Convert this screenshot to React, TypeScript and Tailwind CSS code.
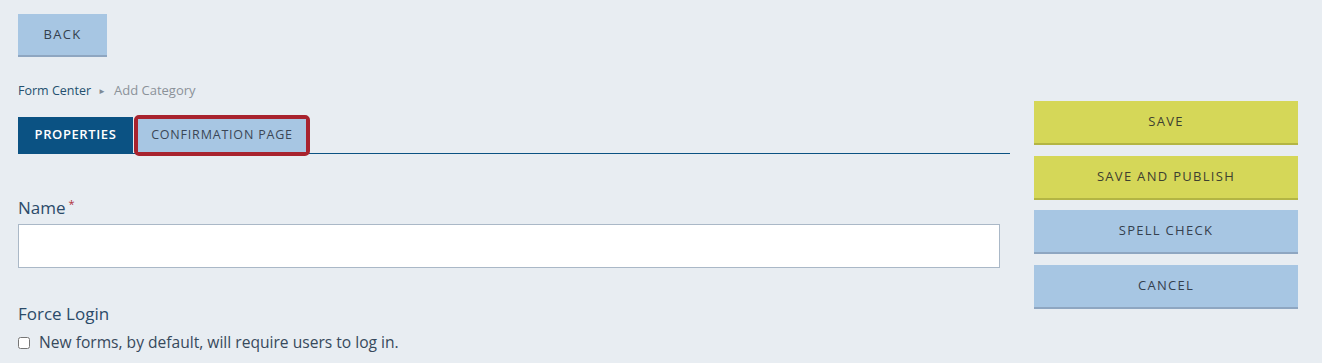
import { useState } from "react";

const lightBtn =
  "bg-[#a7c6e3] border-b-2 border-[#8ea6c1] text-[#34404e] text-[13px] tracking-[1.3px] uppercase";
const yellowBtn =
  "bg-[#d5d758] border-b-2 border-[#b3b544] text-[#3d4030] text-[13px] tracking-[1.3px] uppercase";

export default function App() {
  const [name, setName] = useState("");
  const [forceLogin, setForceLogin] = useState(false);

  return (
    <div className="min-h-[363px] bg-[#e8edf2] font-['Open_Sans','Liberation_Sans',sans-serif] text-[#2a4763]">
      <div className="flex pl-[18px] pr-[24px] pt-[14px]">
        {/* Main column */}
        <div className="w-[992px]">
          <button className={`${lightBtn} h-[43px] w-[89px] pt-px`}>Back</button>

          {/* Breadcrumb */}
          <div className="mt-[25px] flex h-[18px] items-center text-[12.5px]">
            <span className="text-[#24506f]">Form Center</span>
            <span className="ml-[7px] mr-[8px] text-[8px] text-[#7f8a96]">&#9658;</span>
            <span className="text-[13px] text-[#8b9299]">Add Category</span>
          </div>

          {/* Tabs */}
          <div className="mt-[17px] flex h-[37px] items-start border-b border-[#0b5283]">
            <button className="h-[36px] w-[115px] bg-[#0b5283] text-[13px] font-semibold tracking-[0.6px] text-white">
              PROPERTIES
            </button>
            <div className="relative z-10 -mt-[2px] ml-px h-[41px] w-[176px] rounded-[5px] border-[4px] border-[#a8232e]">
              <button className="h-full w-full bg-[#a7c6e3] text-[12.5px] tracking-[0.8px] text-[#3a4656]">
                CONFIRMATION PAGE
              </button>
            </div>
          </div>

          {/* Name */}
          <div className="mt-[42px] flex h-[24px] items-center text-[17px] text-[#2b4a69]">
            Name
            <span className="ml-[3px] -mt-[8px] text-[11px] text-[#b0303a]">*</span>
          </div>
          <input
            value={name}
            onChange={(e) => setName(e.target.value)}
            className="mt-[4px] block h-[44px] w-[982px] border border-[#aab8c7] bg-white px-3 text-[15px] outline-none"
          />

          {/* Force login */}
          <div className="mt-[34px] flex h-[24px] items-center text-[17px] text-[#2b4a69]">
            Force Login
          </div>
          <label className="mt-[5px] flex items-center gap-[9px] text-[15.6px] text-[#37495c]">
            <input
              type="checkbox"
              checked={forceLogin}
              onChange={(e) => setForceLogin(e.target.checked)}
              className="h-[12px] w-[12px]"
            />
            New forms, by default, will require users to log in.
          </label>
        </div>

        {/* Action buttons */}
        <div className="ml-[24px] mt-[87px] flex w-[264px] flex-col gap-[10.5px]">
          <button className={`${yellowBtn} h-[44px]`}>Save</button>
          <button className={`${yellowBtn} h-[44px]`}>Save and Publish</button>
          <button className={`${lightBtn} h-[44px]`}>Spell Check</button>
          <button className={`${lightBtn} h-[44px]`}>Cancel</button>
        </div>
      </div>
    </div>
  );
}
